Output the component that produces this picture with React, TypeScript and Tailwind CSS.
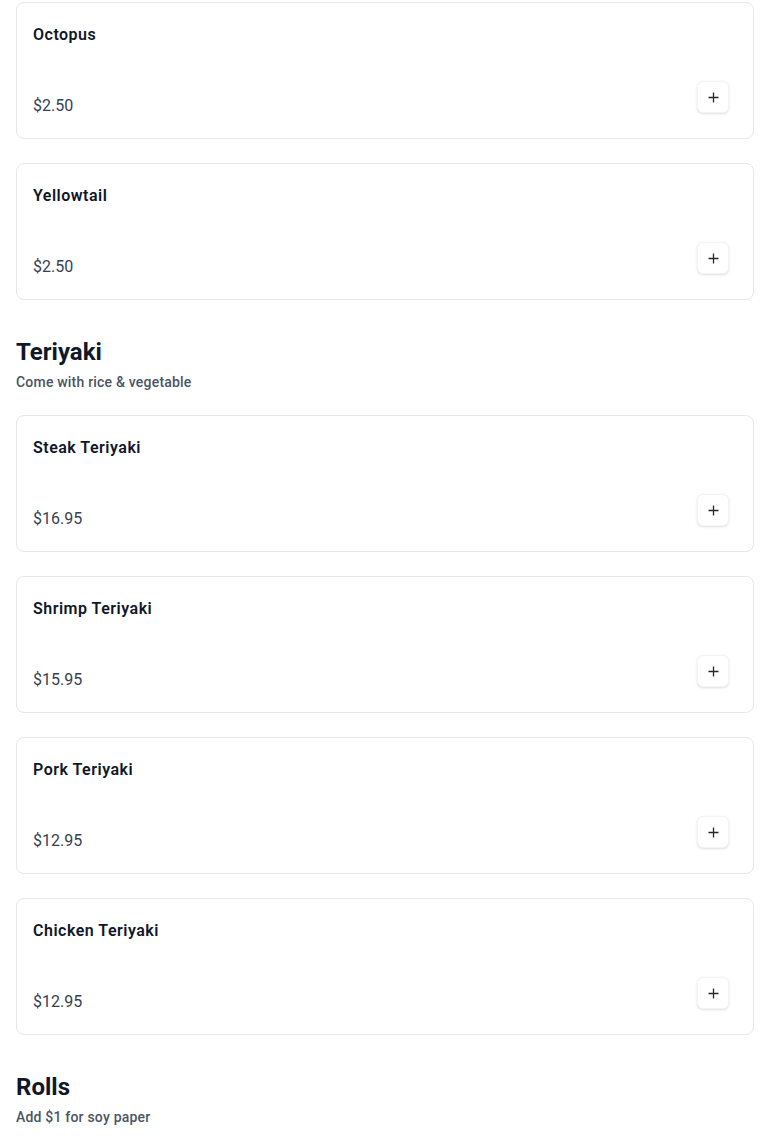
import React from 'react';

interface MenuItem {
  name: string;
  price: string;
}

interface MenuSection {
  title?: string;
  note?: string;
  items: MenuItem[];
}

const sections: MenuSection[] = [
  {
    items: [
      { name: 'Octopus', price: '$2.50' },
      { name: 'Yellowtail', price: '$2.50' },
    ],
  },
  {
    title: 'Teriyaki',
    note: 'Come with rice & vegetable',
    items: [
      { name: 'Steak Teriyaki', price: '$16.95' },
      { name: 'Shrimp Teriyaki', price: '$15.95' },
      { name: 'Pork Teriyaki', price: '$12.95' },
      { name: 'Chicken Teriyaki', price: '$12.95' },
    ],
  },
  {
    title: 'Rolls',
    note: 'Add $1 for soy paper',
    items: [
      { name: 'California Roll', price: '$5.95' },
      { name: 'Spicy Tuna Roll', price: '$6.95' },
    ],
  },
];

const PlusIcon = () => (
  <svg width="11" height="11" viewBox="0 0 11 11" fill="none" stroke="#27272a" strokeWidth={1.3}>
    <path d="M5.5 0.5v10M0.5 5.5h10" />
  </svg>
);

const ItemCard: React.FC<{ item: MenuItem }> = ({ item }) => (
  <div className="rounded-lg border border-gray-200 bg-white px-4 py-5">
    <h3 className="text-base leading-6 font-semibold tracking-[0.5px] text-gray-900">{item.name}</h3>
    <div className="mt-[46px] flex items-start justify-between">
      <span className="pt-px text-base leading-6 text-gray-700">{item.price}</span>
      <button
        type="button"
        className="mr-2 -mt-[12px] flex h-8 w-8 items-center justify-center rounded-md border border-gray-100 bg-white shadow-sm"
      >
        <PlusIcon />
      </button>
    </div>
  </div>
);

export default function App() {
  return (
    <div className="min-h-screen bg-white px-4 pt-0.5 pb-8 font-['Roboto',sans-serif]">
      {sections.map((section, i) => (
        <section key={i}>
          {section.title && (
            <div className="mt-9 mb-[23px]">
              <h2 className="text-2xl leading-8 font-bold text-gray-900">{section.title}</h2>
              {section.note && (
                <p className="mt-1 text-sm leading-5 font-medium tracking-[0.2px] text-gray-600">
                  {section.note}
                </p>
              )}
            </div>
          )}
          <div className="space-y-6">
            {section.items.map((item) => (
              <ItemCard key={item.name} item={item} />
            ))}
          </div>
        </section>
      ))}
    </div>
  );
}
